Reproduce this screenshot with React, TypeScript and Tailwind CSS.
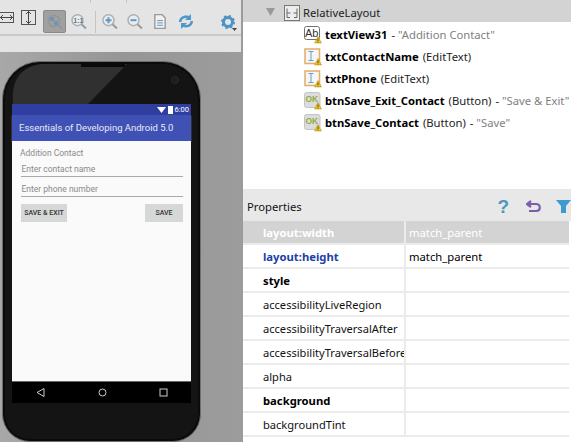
const font = "font-['Noto_Sans','Liberation_Sans',sans-serif]";

function Warn() {
  return (
    <g>
      <path d="M10.500 17 L14 10.500 L17.500 17 Z" fill="#f3c51d" stroke="#a9860f" strokeWidth="0.500" />
      <path d="M14 12.500v2.500M14 15.500v1" stroke="#333" strokeWidth="0.800" />
    </g>
  );
}

function AbIcon() {
  return (
    <svg width="18" height="18" viewBox="0 0 18 18" className="block">
      <rect x="0.500" y="0.500" width="15" height="13" rx="2" fill="#fff" stroke="#707070" />
      <text x="1" y="11" fontSize="11" fontFamily="Liberation Sans" fill="#333">Ab</text>
      <Warn />
    </svg>
  );
}

function EditIcon() {
  return (
    <svg width="18" height="18" viewBox="0 0 18 18" className="block">
      <rect x="1" y="1" width="14.500" height="14.500" fill="#f6f6f6" stroke="#e3ad68" strokeWidth="1.500" />
      <path d="M4.500 3.500h5M7 3.500v9M4.500 12.500h5" stroke="#6a9cc4" fill="none" />
      <Warn />
    </svg>
  );
}

function OkIcon() {
  return (
    <svg width="18" height="18" viewBox="0 0 18 18" className="block">
      <rect x="0.500" y="0.500" width="15.500" height="15" rx="2" fill="#dcdcdc" stroke="#c4c4c4" />
      <text x="1.500" y="10" fontSize="8.500" fontWeight="bold" fontFamily="Liberation Sans" fill="#93ad44">OK</text>
      <Warn />
    </svg>
  );
}

function TreeRow({ icon, name, type, value }: { icon: React.ReactNode; name: string; type?: string; value?: string }) {
  return (
    <div className="flex h-[22px] items-center pl-[61px] whitespace-nowrap">
      <span className="w-[21px] shrink-0">{icon}</span>
      <span className="font-bold text-black">{name}</span>
      {type && <span className="ml-1 text-[#222]">({type})</span>}
      {value && <span className="ml-1 text-[#222]">- <span className="text-[#808080]">{value}</span></span>}
    </div>
  );
}

function Mag({ children }: { children?: React.ReactNode }) {
  return (
    <svg width="16" height="15" viewBox="0 0 16 15" className="block shrink-0">
      <circle cx="6.500" cy="6.200" r="5.500" fill="#ececec" stroke="#a9b0b3" strokeWidth="1.400" />
      <path d="M10.500 10.300L15 14.500" stroke="#9a9a9a" strokeWidth="2" />
      {children}
    </svg>
  );
}

function PropRow({ name, value, tone = "plain", bold }: { name: string; value?: string; tone?: "plain" | "selected" | "blue"; bold?: boolean }) {
  const nameClass =
    tone === "selected"
      ? "text-white font-bold"
      : tone === "blue"
        ? "text-[#1c3fa8] font-bold"
        : bold
          ? "text-black font-bold"
          : "text-[#111] text-[11.100px]";
  return (
    <div className={`flex h-[24px] border-b-2 border-[#ebebeb] ${tone === "selected" ? "bg-[#d3d3d3]" : "bg-white"}`}>
      <div className={`w-[163px] shrink-0 overflow-hidden whitespace-nowrap border-r-2 border-[#ebebeb] pl-[20px] leading-[23px] ${nameClass}`}>{name}</div>
      <div className={`pl-[3px] leading-[23px] ${tone === "selected" ? "text-white" : "text-black"}`}>{value}</div>
    </div>
  );
}

export default function App() {
  return (
    <div className={`flex h-[442px] w-[571px] overflow-hidden bg-white text-[11.250px] ${font}`}>
      {/* Left: design editor */}
      <div className="flex w-[241px] shrink-0 flex-col">
        <div className="relative flex h-[36px] shrink-0 items-center border-b-2 border-[#c9c9c9] bg-[#e4e4e4] pt-[9px]">
          <span className="absolute left-[90px] top-0 h-[3px] w-px bg-[#c4c4c4]" />
          <span className="absolute left-[126px] top-0 h-[3px] w-px bg-[#c4c4c4]" />
          <div className="mb-[8px] ml-[-1px] flex h-[11px] w-[15px] items-center justify-center border border-[#555]">
            <svg width="13" height="7" viewBox="0 0 13 7"><path d="M0 3.500h13M3 1L0.500 3.500L3 6M10 1l2.500 2.500L10 6" stroke="#444" fill="none" /></svg>
          </div>
          <div className="mb-[9px] ml-[7px] flex h-[15px] w-[15px] items-center justify-center border border-[#555]">
            <svg width="7" height="13" viewBox="0 0 7 13"><path d="M3.500 0v13M1 3l2.500-2.500L6 3M1 10l2.500 2.500L6 10" stroke="#444" fill="none" /></svg>
          </div>
          <div className="ml-[7px] flex h-[23px] w-[23px] items-center justify-center rounded-[2px] border border-[#8a8a8a] bg-[#a0a0a0]">
            <svg width="16" height="16" viewBox="0 0 16 16">
              <circle cx="7" cy="7" r="5.700" fill="none" stroke="#949494" strokeWidth="1.200" />
              <path d="M11 11l4 4" stroke="#949494" strokeWidth="2" />
              <rect x="3" y="3" width="4" height="4" fill="#6b95bd" />
              <rect x="7" y="7" width="4" height="4" fill="#6b95bd" />
            </svg>
          </div>
          <div className="ml-[5px]">
            <Mag><text x="2.300" y="8.800" fontSize="7" fontWeight="bold" fontFamily="Liberation Sans" fill="#5a7a92">1:1</text></Mag>
          </div>
          <span className="ml-[8px] h-[22px] w-px bg-[#c4c4c4]" />
          <div className="ml-[6px]"><Mag><path d="M3.500 6.200h6M6.500 3.200v6" stroke="#5a9ac9" strokeWidth="2" /></Mag></div>
          <div className="ml-[9px]"><Mag><path d="M3.500 6.200h6" stroke="#5a9ac9" strokeWidth="2" /></Mag></div>
          <div className="ml-[11px]">
            <svg width="12" height="15" viewBox="0 0 12 16" className="block">
              <path d="M0.500 0.500H8L11.500 4V15.500H0.500Z" fill="#f0f0f0" stroke="#9a9a9a" strokeWidth="1.500" />
              <path d="M3 7h6M3 9.500h6M3 12h6" stroke="#4f93c7" />
            </svg>
          </div>
          <div className="ml-[12px]">
            <svg width="16" height="15" viewBox="0 0 16 15" className="block">
              <path d="M1 8C1 3 6 0.500 11 2L13 0V6H7L9 4C6 3.500 3.500 5 3.500 8ZM15 7C15 12 10 14.500 5 13L3 15V9H9L7 11C10 11.500 12.500 10 12.500 7Z" fill="#4f97c9" />
            </svg>
          </div>
          <div className="relative ml-[27px]">
            <svg width="14" height="14" viewBox="0 0 14 14" className="block">
              <circle cx="7" cy="7" r="4.500" fill="none" stroke="#4b94c8" strokeWidth="3" />
              <circle cx="7" cy="7" r="6" fill="none" stroke="#4b94c8" strokeWidth="2" strokeDasharray="2.300 2.400" />
            </svg>
            <svg width="5" height="3" viewBox="0 0 5 3" className="absolute left-[11px] top-[13px]"><path d="M0 0h5L2.500 3Z" fill="#444" /></svg>
          </div>
        </div>
        <div className="h-[16px] shrink-0 bg-[#e4e4e4]" />
        <div className="flex-1 bg-gradient-to-r from-[#a8a8a8] via-[#969696] to-[#9c9c9c] pl-[2px] pt-[9px]">
          {/* Device */}
          <div className="relative h-[381px] w-[199px] rounded-b-[28px] rounded-t-[38px] border border-[#6e6e6e] bg-[#141414] pl-[9px] pt-[42px] shadow-[inset_0_0_0_2px_#0b0b0b]">
            <svg className="absolute left-[2px] top-[2px]" width="193" height="40" viewBox="0 0 193 40">
              <path d="M8 40 C6 18 14 3 36 0 H122 L83 40 Z" fill="#303030" />
              <rect x="76" y="0" width="44" height="3" fill="#0a0a0a" />
              <circle cx="170" cy="16" r="3.500" fill="#1d1d1d" stroke="#2b2b2b" />
            </svg>
            <div className="relative flex h-[299px] w-[179px] flex-col font-['Roboto',sans-serif]">
              <div className="flex h-[11px] shrink-0 items-center justify-end gap-[2px] bg-[#303f9f] pr-[2px] text-[7.500px] leading-none text-white">
                <svg width="9" height="6" viewBox="0 0 9 6"><path d="M0 0h9L4.500 6Z" fill="#fff" /></svg>
                <span className="h-[8px] w-[5px] bg-white" />
                <span>6:00</span>
              </div>
              <div className="flex h-[26px] shrink-0 items-center bg-[#3f51b5] pl-[7px] text-[9.500px] text-[#e8eaf6] shadow-[0_1px_1px_#bbb]">Essentials of Developing Android 5.0</div>
              <div className="flex-1 bg-[#fafafa] pl-[8px] pr-[8px] pt-[6px] text-[8.500px] text-[#8a8a8a]">
                <div className="h-[13px] leading-[13px]">Addition Contact</div>
                <div className="ml-[1px] mt-[2px] h-[15px] border-b border-[#aaa] pl-[0.500px] leading-[15px]">Enter contact name</div>
                <div className="ml-[1px] mt-[5px] h-[15px] border-b border-[#aaa] pl-[0.500px] leading-[15px]">Enter phone number</div>
                <div className="ml-[1px] mt-[7px] flex justify-between text-[7px] font-medium text-[#333]">
                  <div className="flex h-[18px] w-[46px] items-center justify-center bg-[#d6d7d7]">SAVE &amp; EXIT</div>
                  <div className="flex h-[18px] w-[38px] items-center justify-center bg-[#d6d7d7]">SAVE</div>
                </div>
              </div>
              <div className="flex h-[22px] shrink-0 items-center justify-between border-t border-[#666] bg-black pl-[24px] pr-[23px]">
                <svg width="9" height="9" viewBox="0 0 9 9"><path d="M8 0.500V8.500L1 4.500Z" fill="none" stroke="#ccc" /></svg>
                <svg width="9" height="9" viewBox="0 0 9 9"><circle cx="4.500" cy="4.500" r="3.500" fill="none" stroke="#ccc" /></svg>
                <svg width="9" height="9" viewBox="0 0 9 9"><rect x="1" y="1" width="7" height="7" fill="none" stroke="#ccc" /></svg>
              </div>
            </div>
          </div>
        </div>
      </div>

      {/* Right: tree and properties */}
      <div className="flex w-[330px] shrink-0 flex-col border-l-2 border-[#9b9b9b]">
        <div className="flex h-[189px] shrink-0 flex-col bg-white">
          <div className="mb-[2px] flex h-[22px] shrink-0 items-center bg-[#d3d3d3] pl-[23px] pt-[4px] text-[#222]">
            <svg width="9" height="8" viewBox="0 0 9 8" className="mb-[2px]"><path d="M0 0h9L4.500 8Z" fill="#999" /></svg>
            <svg width="16" height="16" viewBox="0 0 16 16" className="ml-[9px] mr-[3px]">
              <rect x="0.500" y="0.500" width="15" height="15" fill="#eee" stroke="#777" />
              <path d="M3 3.500V12.500H6M3 8H6.500M13 3.500V12.500H10M13 8H9.500" stroke="#666" fill="none" />
            </svg>
            RelativeLayout
          </div>
          <TreeRow icon={<AbIcon />} name="textView31" value={'"Addition Contact"'} />
          <TreeRow icon={<EditIcon />} name="txtContactName" type="EditText" />
          <TreeRow icon={<EditIcon />} name="txtPhone" type="EditText" />
          <TreeRow icon={<OkIcon />} name="btnSave_Exit_Contact" type="Button" value={'"Save & Exit"'} />
          <TreeRow icon={<OkIcon />} name="btnSave_Contact" type="Button" value={'"Save"'} />
        </div>
        <div className="relative flex h-[32px] shrink-0 items-center justify-between bg-[#e8e8e8] pl-[4px] pt-[3px] text-[#111]">
          <span className="mt-[2px]">Properties</span>
          <div className="flex items-center">
            <span className="font-['Liberation_Sans',sans-serif] text-[19px] font-bold leading-none text-[#4f97c1]">?</span>
            <svg width="15" height="13" viewBox="0 0 15 13" className="ml-[17px]">
              <path d="M5 1L1 4L5 7M1 4H10C15 4 15 11 10 11H3" fill="none" stroke="#7b5ea7" strokeWidth="2.200" />
            </svg>
            <svg width="15" height="13" viewBox="0 0 15 13" className="ml-[15px]"><path d="M0 0H15L10 6V13H5V6Z" fill="#3f9ad0" /></svg>
          </div>
        </div>
        <div className="mr-[2px] flex-1 bg-white">
          <PropRow name="layout:width" value="match_parent" tone="selected" />
          <PropRow name="layout:height" value="match_parent" tone="blue" />
          <PropRow name="style" bold />
          <PropRow name="accessibilityLiveRegion" />
          <PropRow name="accessibilityTraversalAfter" />
          <PropRow name="accessibilityTraversalBefore" />
          <PropRow name="alpha" />
          <PropRow name="background" bold />
          <PropRow name="backgroundTint" />
        </div>
      </div>
    </div>
  );
}
